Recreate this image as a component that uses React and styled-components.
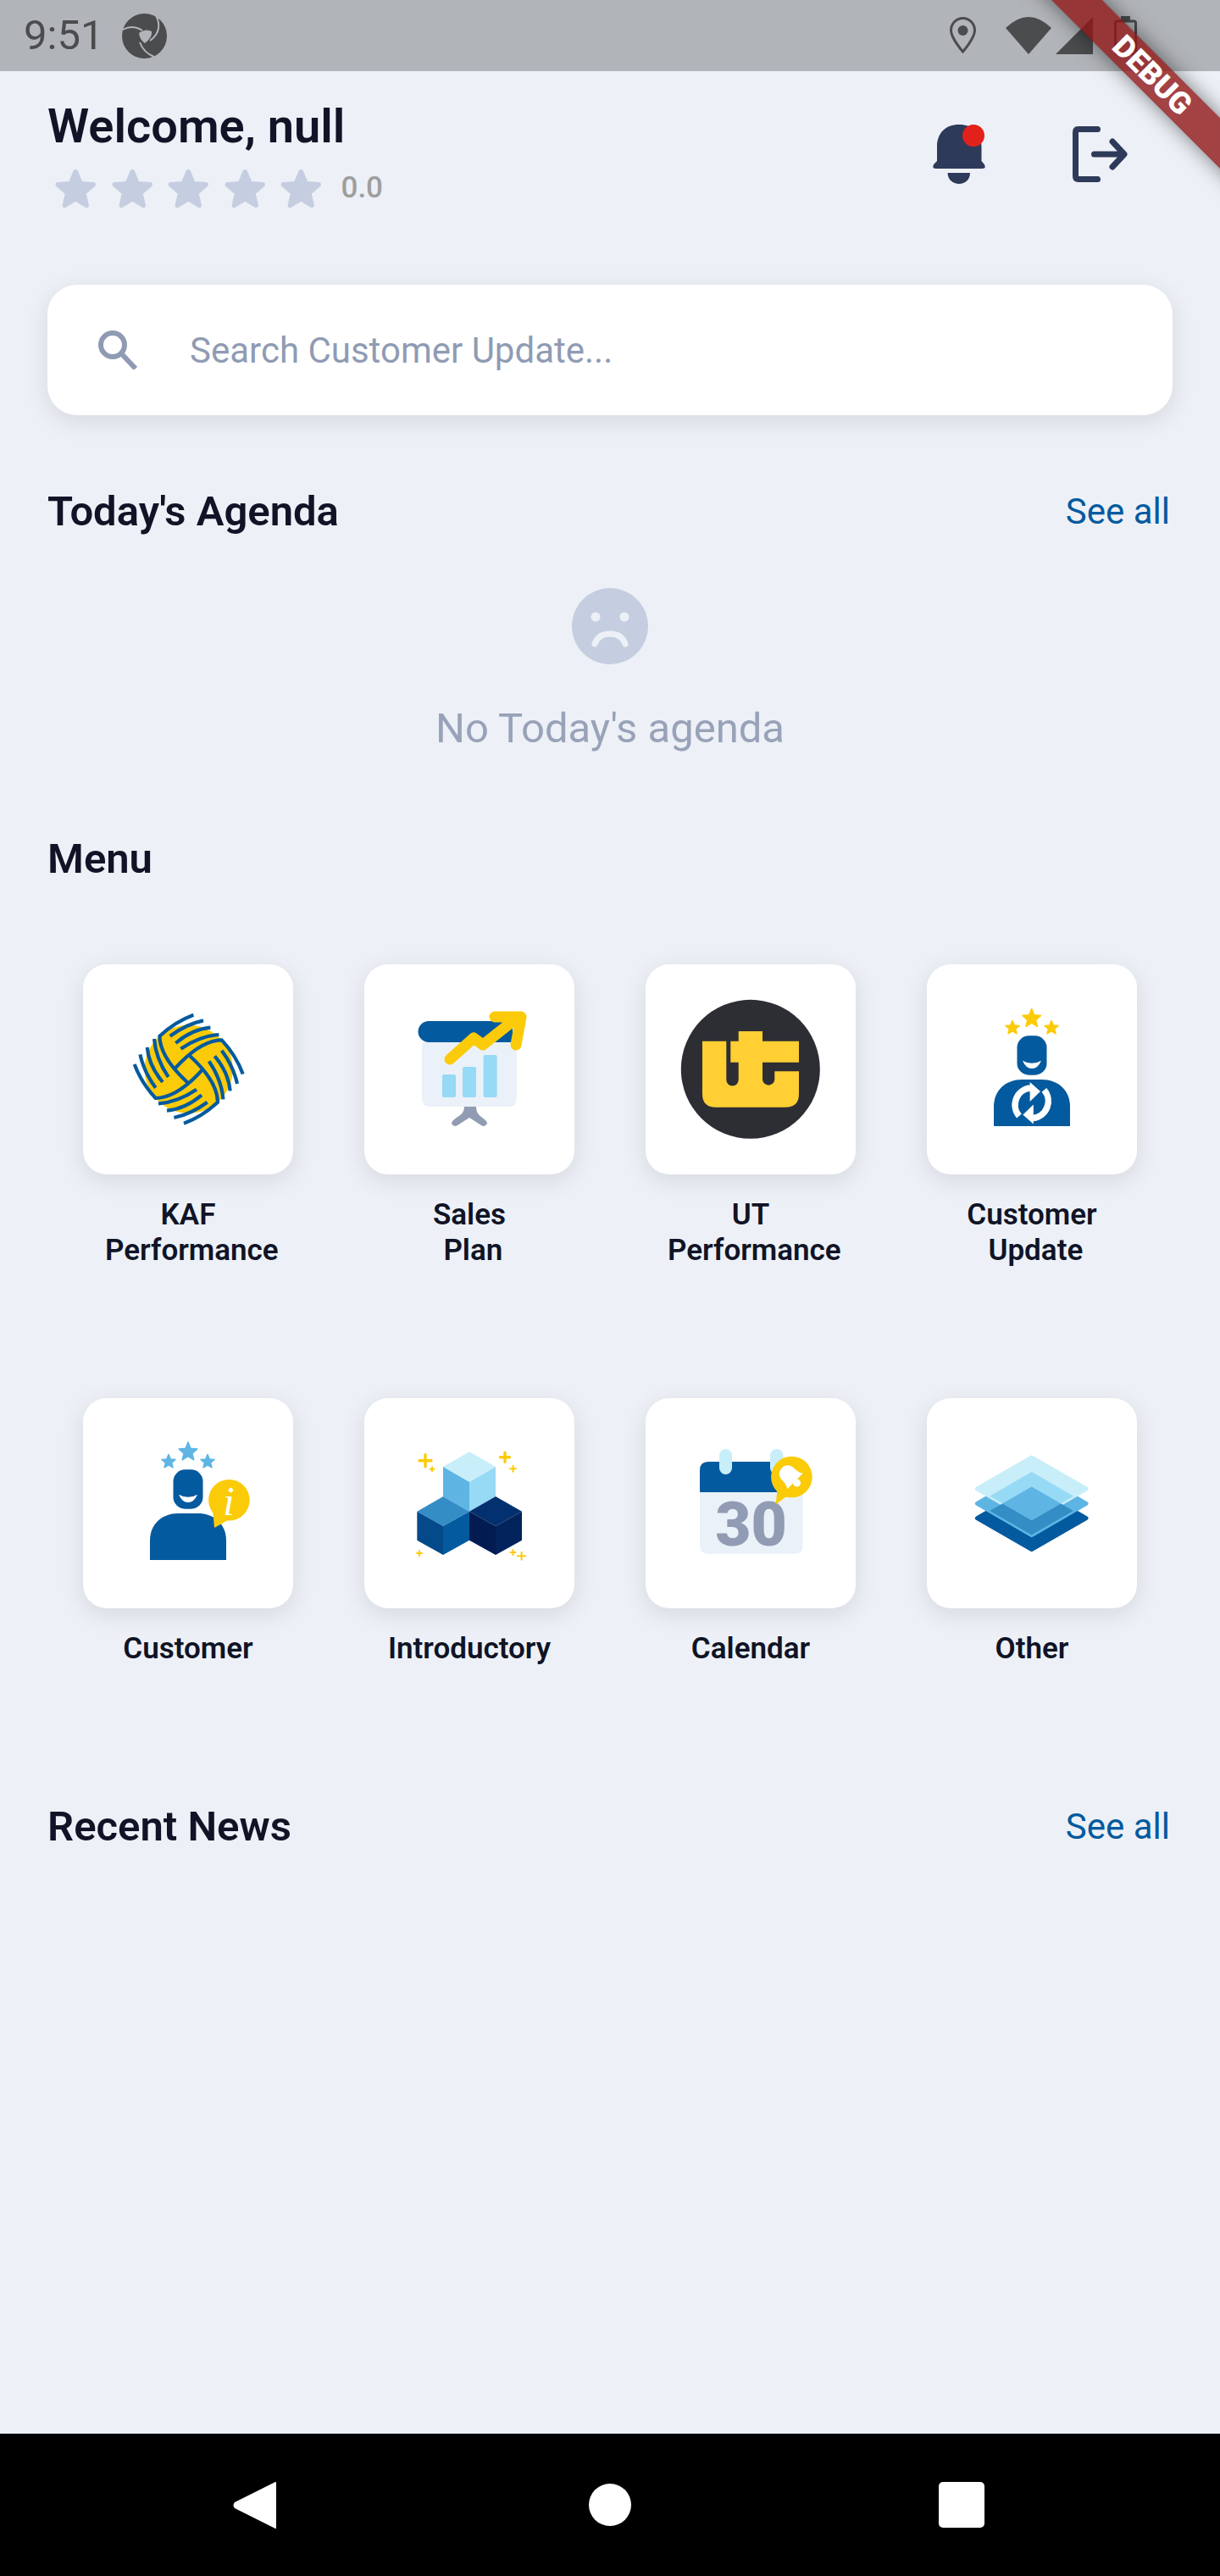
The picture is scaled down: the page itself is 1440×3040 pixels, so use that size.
import React from "react";
import styled, { createGlobalStyle } from "styled-components";

const GlobalStyle = createGlobalStyle`
  html, body {
    margin: 0;
    padding: 0;
    background: #edf1f7;
  }
  * {
    box-sizing: border-box;
  }
`;

const BLUE = "#045a9e";
const YELLOW = "#fbcb0a";
const SKY = "#5eb5e4";
const LIGHT = "#96daf5";
const PALE = "#c8eefa";
const MID = "#358dc6";
const SLATE = "#919cb4";
const BOARD = "#eaf1f8";
const NAVY = "#2e3a59";

const Screen = styled.div`
  position: relative;
  width: 1440px;
  height: 3040px;
  overflow: hidden;
  display: flex;
  flex-direction: column;
  background: #edf1f7;
  font-family: Roboto, "Liberation Sans", sans-serif;
  color: #101426;
`;

const StatusBar = styled.div`
  height: 84px;
  flex: none;
  display: flex;
  align-items: center;
  padding: 0 98px 0 28px;
  background: #b1b4b9;
  color: #4a4c4e;
`;

const Clock = styled.span`
  font-size: 49px;
  line-height: 84px;
  margin-right: 22px;
`;

const SystemIcon = styled.svg`
  display: block;
  flex: none;
  margin-left: ${(p) => p.$gap || 0}px;
`;

const Spacer = styled.div`
  flex: 1;
`;

const Main = styled.main`
  flex: 1;
  padding: 32px 56px 0;
`;

const Header = styled.header`
  display: flex;
  justify-content: space-between;
`;

const Greeting = styled.h1`
  margin: 0;
  font-size: 56px;
  line-height: 66px;
  font-weight: 600;
`;

const RatingRow = styled.div`
  display: flex;
  align-items: center;
  margin-top: 8px;
  height: 66px;
`;

const RatingStar = styled.svg`
  display: block;
  width: 66.5px;
  height: 66.5px;
  fill: #c5cee0;
`;

const RatingValue = styled.span`
  margin-left: 14px;
  margin-top: -3px;
  font-size: 35px;
  font-weight: 500;
  color: #9e9e9e;
`;

const HeaderActions = styled.div`
  display: flex;
  align-items: flex-start;
  gap: 103px;
  padding: 31px 53px 0 0;
`;

const SearchCard = styled.div`
  display: flex;
  align-items: center;
  height: 154px;
  margin-top: 80px;
  padding-left: 60px;
  border-radius: 35px;
  background: #fff;
  box-shadow: 0 7px 28px rgba(0, 0, 0, 0.1);
`;

const SearchText = styled.span`
  margin-left: 62px;
  font-size: 42px;
  color: #8f9bb3;
`;

const SectionRow = styled.div`
  display: flex;
  justify-content: space-between;
  align-items: center;
  margin-top: ${(p) => p.$top}px;
`;

const SectionTitle = styled.h2`
  margin: 0;
  font-size: 49px;
  line-height: 58px;
  font-weight: 600;
`;

const SeeAll = styled.a`
  font-size: 42px;
  margin-right: 3px;
  margin-top: -2px;
  color: ${BLUE};
`;

const EmptyState = styled.div`
  display: flex;
  flex-direction: column;
  align-items: center;
  margin-top: 61px;
`;

const EmptyText = styled.p`
  margin: 48px 0 0;
  font-size: 49px;
  line-height: 55px;
  color: #98a2b8;
`;

const MenuGrid = styled.div`
  display: grid;
  grid-template-columns: repeat(4, 248px);
  column-gap: 84px;
  row-gap: 153px;
  margin-top: 95px;
  padding-left: 42px;
  align-items: start;
`;

const MenuItem = styled.div`
  display: flex;
  flex-direction: column;
  align-items: center;
`;

const MenuCard = styled.div`
  width: 248px;
  height: 248px;
  border-radius: 28px;
  background: #fff;
  box-shadow: 0 7px 28px rgba(0, 0, 0, 0.1);
`;

const MenuLabel = styled.div`
  margin-top: 27px;
  font-size: 35px;
  line-height: 42px;
  font-weight: 600;
  text-align: center;
  white-space: pre;
`;

const Art = styled.svg`
  display: block;
`;

const NavBar = styled.nav`
  height: 168px;
  flex: none;
  display: flex;
  align-items: center;
  padding-left: 275px;
  background: #000;
`;

const NavBack = styled.svg`
  display: block;
`;

const NavHome = styled.div`
  width: 50px;
  height: 50px;
  margin-left: 369px;
  border-radius: 50%;
  background: #fff;
`;

const NavRecent = styled.div`
  width: 54px;
  height: 54px;
  margin-left: 363px;
  border-radius: 5px;
  background: #fff;
`;

const DebugRibbon = styled.div`
  position: absolute;
  left: 1155px;
  top: 63px;
  width: 400px;
  height: 42px;
  padding-left: 14px;
  display: flex;
  align-items: center;
  justify-content: center;
  transform: rotate(45deg);
  background: linear-gradient(rgba(183, 28, 28, 0.63), rgba(183, 28, 28, 0.63)), rgba(0, 0, 0, 0.45);
  box-shadow: 0 0 24px rgba(0, 0, 0, 0.5);
  color: #fff;
  font-size: 36px;
  line-height: 42px;
  font-weight: 900;
`;

const starPoints = (cx, cy, r) => {
  const pts = [];
  for (let i = 0; i < 10; i++) {
    const rad = i % 2 === 0 ? r : r * 0.45;
    const a = (Math.PI / 5) * i - Math.PI / 2;
    pts.push(`${(cx + rad * Math.cos(a)).toFixed(1)},${(cy + rad * Math.sin(a)).toFixed(1)}`);
  }
  return pts.join(" ");
};

const Star = ({ cx, cy, r, color }) => (
  <polygon
    points={starPoints(cx, cy, r)}
    fill={color}
    stroke={color}
    strokeWidth="1.5"
    strokeLinejoin="round"
  />
);

const Person = () => (
  <>
    <rect x="106.5" y="84.3" width="35" height="46.4" rx="14" fill={BLUE} />
    <path d="M113 113.7Q124 120 135 113.7Q131 123 124 123Q117 123 113 113.7Z" fill="#fff" />
    <path d="M79 191V168C79 148 94 136 112 136H136C154 136 169 148 169 168V191Z" fill={BLUE} />
  </>
);

const CardArt = ({ children }) => (
  <Art width="248" height="248" viewBox="0 0 248 248">
    {children}
  </Art>
);

const KafArt = () => {
  const arm = (
    <g fill="none" stroke={BLUE} strokeWidth="4.2">
      <path d="M5.7 -64Q-16 -56 -34.3 -39Q-34 -14 -1 16" />
      <path d="M17.3 -57.3Q-3 -53 -22 -39" />
      <path d="M25.7 -49Q4 -47 -15.3 -30.7" />
      <path d="M35.7 -40.7Q13 -39 -9.3 -24" />
    </g>
  );
  return (
    <CardArt>
      <g transform="translate(124.7 123.7)">
        <circle r="52" fill={YELLOW} />
        {[0, 90, 180, 270].map((deg) => (
          <g key={deg} transform={`rotate(${deg})`}>
            {arm}
          </g>
        ))}
      </g>
    </CardArt>
  );
};

const SalesArt = () => (
  <CardArt>
    <path d="M68 92H180V158Q180 168 170 168H78Q68 168 68 158Z" fill={BOARD} />
    <path d="M76 67H175V92H76A12.5 12.5 0 0 1 76 67Z" fill={BLUE} />
    <rect x="92" y="130" width="16" height="27" rx="2" fill={LIGHT} />
    <rect x="116" y="121" width="16" height="36" rx="2" fill={LIGHT} />
    <rect x="140.6" y="107" width="16" height="50" rx="2" fill={LIGHT} />
    <path
      d="M118 168H132Q132 176 138 180L143 184Q147 188 143 190Q141 192 138 190L124 181L110 190Q107 192 105 190Q101 188 105 184L110 180Q118 176 118 168Z"
      fill={SLATE}
    />
    <path
      d="M101 112L129 87L140 95L178 65M154 62H185L179 95"
      fill="none"
      stroke={YELLOW}
      strokeWidth="13"
      strokeLinecap="round"
      strokeLinejoin="round"
    />
  </CardArt>
);

const UtArt = () => (
  <CardArt>
    <circle cx="123.8" cy="123.8" r="82" fill="#2d2e33" />
    <path
      d="M67 90.7H95.3V136.3A7.2 7.2 0 0 0 109.7 136.3V115.7H100.3V90.7H109.7V79H138V90.7H181V115.7H138V136.3A7.2 7.2 0 0 0 152.3 136.3V126.3H181V153Q181 168.7 164.7 168.7H83Q67 168.7 67 153Z"
      fill="#ffcf33"
    />
  </CardArt>
);

const UpdateArt = () => (
  <CardArt>
    <Star cx={123.7} cy={64} r={11.5} color={YELLOW} />
    <Star cx={101} cy={75} r={8.5} color={YELLOW} />
    <Star cx={147} cy={75} r={8.5} color={YELLOW} />
    <Person />
    {[0, 180].map((deg) => (
      <g key={deg} transform={`rotate(${deg} 123.7 163.7)`}>
        <path d="M109 179A20 20 0 0 1 122 146" fill="none" stroke="#fff" strokeWidth="7.5" />
        <polygon points="121.6,139 134,150 121.6,162" fill="#fff" />
      </g>
    ))}
  </CardArt>
);

const CustomerArt = () => (
  <CardArt>
    <Star cx={124} cy={63.5} r={11.5} color={SKY} />
    <Star cx={101} cy={75} r={8.5} color={SKY} />
    <Star cx={147} cy={75} r={8.5} color={SKY} />
    <Person />
    <path d="M153 130L155 153L171 144Z" fill={YELLOW} />
    <circle cx="172.4" cy="120.3" r="24.3" fill={YELLOW} />
    <text
      x="172"
      y="138"
      textAnchor="middle"
      fontFamily="'Liberation Serif', serif"
      fontStyle="italic"
      fontSize="48"
      fill="#fff"
    >
      i
    </text>
  </CardArt>
);

const Sparkle = ({ x, y, r }) => (
  <path
    d={`M${x - r} ${y}H${x + r}M${x} ${y - r}V${y + r}`}
    stroke={YELLOW}
    strokeWidth={r > 5 ? 3.4 : 2}
    strokeLinecap="round"
    fill="none"
  />
);

const CubesArt = () => (
  <CardArt>
    <polygon points="124,63.3 155,81 124,99 93,81" fill={PALE} />
    <polygon points="93,81 124,99 124,133.7 93,116" fill={SKY} />
    <polygon points="155,81 124,99 124,133.7 155,116" fill={LIGHT} />
    <polygon points="93,116 124,133.7 93,151 62.3,133.7" fill={MID} />
    <polygon points="62.3,133.7 93,151 93,185 62.3,167.7" fill="#04498a" />
    <polygon points="124,133.7 93,151 93,185 124,167.7" fill={BLUE} />
    <polygon points="155,116 186,133.7 155,151 124,133.7" fill="#03306f" />
    <polygon points="124,133.7 155,151 155,185 124,167.7" fill="#021c52" />
    <polygon points="186,133.7 155,151 155,185 186,167.7" fill="#03235c" />
    <Sparkle x={72} y={73.7} r={7} />
    <Sparkle x={80} y={83.7} r={2.5} />
    <Sparkle x={166} y={69.7} r={5.5} />
    <Sparkle x={175.5} y={83.3} r={3.5} />
    <Sparkle x={65} y={183} r={3} />
    <Sparkle x={175.5} y={182} r={3} />
    <Sparkle x={185.6} y={186.3} r={4.5} />
  </CardArt>
);

const CalendarArt = () => (
  <CardArt>
    <path d="M64 111H185.6V174Q185.6 183.7 176 183.7H74Q64 183.7 64 174Z" fill={BOARD} />
    <path d="M74 75H175.6Q185.6 75 185.6 85V111H64V85Q64 75 74 75Z" fill={BLUE} />
    <rect x="87" y="60" width="15" height="30" rx="7.5" fill={PALE} />
    <rect x="147" y="60" width="15.5" height="30" rx="7.5" fill={PALE} />
    <text
      x="124.5"
      y="173.5"
      textAnchor="middle"
      fontFamily="Roboto, sans-serif"
      fontWeight="900"
      fontSize="73"
      fill={SLATE}
    >
      30
    </text>
    <path d="M156 104L153.6 125.3L172 112Z" fill={YELLOW} />
    <circle cx="172.4" cy="93" r="24.3" fill={YELLOW} />
    <g transform="translate(171.5 93) rotate(-45)" fill="#fff">
      <path d="M-13 7C-10 3 -10 -2 -10 -4C-10 -12 -5 -15 0 -15C5 -15 10 -12 10 -4C10 -2 10 3 13 7Z" />
      <circle cy="10" r="4.5" />
    </g>
  </CardArt>
);

const LAYER_A = "M123.7 70L188 107L123.7 144L59.4 107Z";
const LAYER_B = "M123.7 87L188 124.3L123.7 161.6L59.4 124.3Z";
const LAYER_C = "M123.7 104.4L188 141.7L123.7 178.6L59.4 141.7Z";

const LayersArt = () => (
  <CardArt>
    <defs>
      <clipPath id="layer-a">
        <path d={LAYER_A} />
      </clipPath>
      <clipPath id="layer-b">
        <path d={LAYER_B} />
      </clipPath>
    </defs>
    <g strokeWidth="5" strokeLinejoin="round">
      <path d={LAYER_C} fill={BLUE} stroke={BLUE} />
      <path d={LAYER_B} fill={SKY} stroke={SKY} />
      <path d={LAYER_A} fill={PALE} stroke={PALE} />
    </g>
    <path d={LAYER_C} fill={MID} clipPath="url(#layer-b)" />
    <path d={LAYER_B} fill={LIGHT} clipPath="url(#layer-a)" />
    <path d={LAYER_C} fill={SKY} clipPath="url(#layer-a)" />
  </CardArt>
);

const BellIcon = () => (
  <Art width="62" height="70" viewBox="0 0 62 70">
    <path
      d="M5 43V26C5 10 15 0 31 0C47 0 57.5 10 57.5 26V43L60 46C63 50 62 52 58 52H4C0 52 -1 50 2 46Z"
      fill={NAVY}
    />
    <path d="M17.5 57H44C44 65 38 70 31 70C24 70 17.5 65 17.5 57Z" fill={NAVY} />
    <circle cx="48" cy="13" r="13" fill="#e3211b" />
  </Art>
);

const LogoutIcon = () => (
  <Art width="65" height="70" viewBox="0 -2 65 70">
    <path
      d="M29.5 3.5H7Q3.5 3.5 3.5 7V59Q3.5 62.5 7 62.5H29.5M25.5 33H60.5M47 18L61 33L47 48"
      fill="none"
      stroke={NAVY}
      strokeWidth="7"
      strokeLinecap="round"
      strokeLinejoin="round"
    />
  </Art>
);

const SearchIcon = () => (
  <Art width="46" height="46" viewBox="0 0 46 46">
    <circle cx="17" cy="17" r="14" fill="none" stroke="#8f9bb3" strokeWidth="6" />
    <path d="M27 27L44 45" stroke="#8f9bb3" strokeWidth="6" />
  </Art>
);

const SadFace = () => (
  <Art width="90" height="90" viewBox="0 0 90 90">
    <circle cx="45" cy="45" r="45" fill="#c5cee0" />
    <circle cx="28" cy="34" r="5.5" fill="#edf1f7" />
    <circle cx="62" cy="34" r="5.5" fill="#edf1f7" />
    <path
      d="M27 66C30 57 37 54 45 54C53 54 60 57 63 66"
      fill="none"
      stroke="#edf1f7"
      strokeWidth="7"
      strokeLinecap="round"
    />
  </Art>
);

const MENU = [
  { label: "KAF\n Performance", art: <KafArt /> },
  { label: "Sales\n Plan", art: <SalesArt /> },
  { label: "UT\n Performance", art: <UtArt /> },
  { label: "Customer\n Update", art: <UpdateArt /> },
  { label: "Customer", art: <CustomerArt /> },
  { label: "Introductory", art: <CubesArt /> },
  { label: "Calendar", art: <CalendarArt /> },
  { label: "Other", art: <LayersArt /> },
];

export default function App() {
  return (
    <Screen>
      <GlobalStyle />
      <StatusBar>
        <Clock>9:51</Clock>
        <SystemIcon width="53" height="53" viewBox="0 0 53 53">
          <circle cx="26.5" cy="26.5" r="26.5" fill="#4a4c4e" />
          <g fill="none" stroke="#b1b4b9" strokeWidth="2">
            <path d="M40 2C46 14 44 24 33 32" />
            <path d="M1 19C8 15 16 15 24 20" />
            <path d="M21 34C24 42 30 48 38 51" />
          </g>
          <path d="M20 23Q28 17 35 21Q36 28 27 35Q21 31 20 23Z" fill="#b1b4b9" />
        </SystemIcon>
        <Spacer />
        <SystemIcon width="31" height="44" viewBox="0 0 31 44">
          <path
            d="M15.5 1.5C7.5 1.5 1.5 8 1.5 16C1.5 25 15.5 41 15.5 41C15.5 41 29.5 25 29.5 16C29.5 8 23.5 1.5 15.5 1.5Z"
            fill="none"
            stroke="#4a4c4e"
            strokeWidth="3"
          />
          <circle cx="15.5" cy="16" r="6" fill="#4a4c4e" />
        </SystemIcon>
        <SystemIcon $gap={35} width="54" height="44" viewBox="0 0 54 44">
          <path d="M0 13Q27 -13 54 13L27 44Z" fill="#4a4c4e" />
        </SystemIcon>
        <SystemIcon $gap={5} width="44" height="44" viewBox="0 0 44 44">
          <path d="M0 44H44V0Z" fill="#4a4c4e" />
        </SystemIcon>
        <SystemIcon $gap={25} width="27" height="46" viewBox="0 0 27 46">
          <path d="M8 0H19V5H8Z" fill="#4a4c4e" />
          <rect x="1.5" y="6" width="24" height="38.5" rx="2" fill="none" stroke="#4a4c4e" strokeWidth="3" />
        </SystemIcon>
      </StatusBar>

      <Main>
        <Header>
          <div>
            <Greeting>Welcome, null</Greeting>
            <RatingRow>
              {[1, 2, 3, 4, 5].map((n) => (
                <RatingStar key={n} viewBox="0 0 24 24">
                  <path d="M12 17.27l4.15 2.51c.76.46 1.69-.22 1.49-1.08l-1.1-4.72 3.67-3.18c.67-.58.31-1.68-.57-1.75l-4.83-.41-1.89-4.46c-.34-.81-1.5-.81-1.84 0L9.19 8.63l-4.83.41c-.88.07-1.24 1.17-.57 1.75l3.67 3.18-1.1 4.72c-.2.86.73 1.54 1.49 1.08l4.15-2.5z" />
                </RatingStar>
              ))}
              <RatingValue>0.0</RatingValue>
            </RatingRow>
          </div>
          <HeaderActions>
            <BellIcon />
            <LogoutIcon />
          </HeaderActions>
        </Header>

        <SearchCard>
          <SearchIcon />
          <SearchText>Search Customer Update...</SearchText>
        </SearchCard>

        <SectionRow $top={85}>
          <SectionTitle>Today's Agenda</SectionTitle>
          <SeeAll>See all</SeeAll>
        </SectionRow>

        <EmptyState>
          <SadFace />
          <EmptyText>No Today's agenda</EmptyText>
        </EmptyState>

        <SectionRow $top={98}>
          <SectionTitle>Menu</SectionTitle>
        </SectionRow>

        <MenuGrid>
          {MENU.map((item) => (
            <MenuItem key={item.label}>
              <MenuCard>{item.art}</MenuCard>
              <MenuLabel>{item.label}</MenuLabel>
            </MenuItem>
          ))}
        </MenuGrid>

        <SectionRow $top={160}>
          <SectionTitle>Recent News</SectionTitle>
          <SeeAll>See all</SeeAll>
        </SectionRow>
      </Main>

      <NavBar>
        <NavBack width="51" height="57" viewBox="0 0 51 57">
          <path d="M50 1Q51 0 51 3V54Q51 57 50 56L2 32Q-1 28.5 2 25Z" fill="#fff" />
        </NavBack>
        <NavHome />
        <NavRecent />
      </NavBar>

      <DebugRibbon>DEBUG</DebugRibbon>
    </Screen>
  );
}
